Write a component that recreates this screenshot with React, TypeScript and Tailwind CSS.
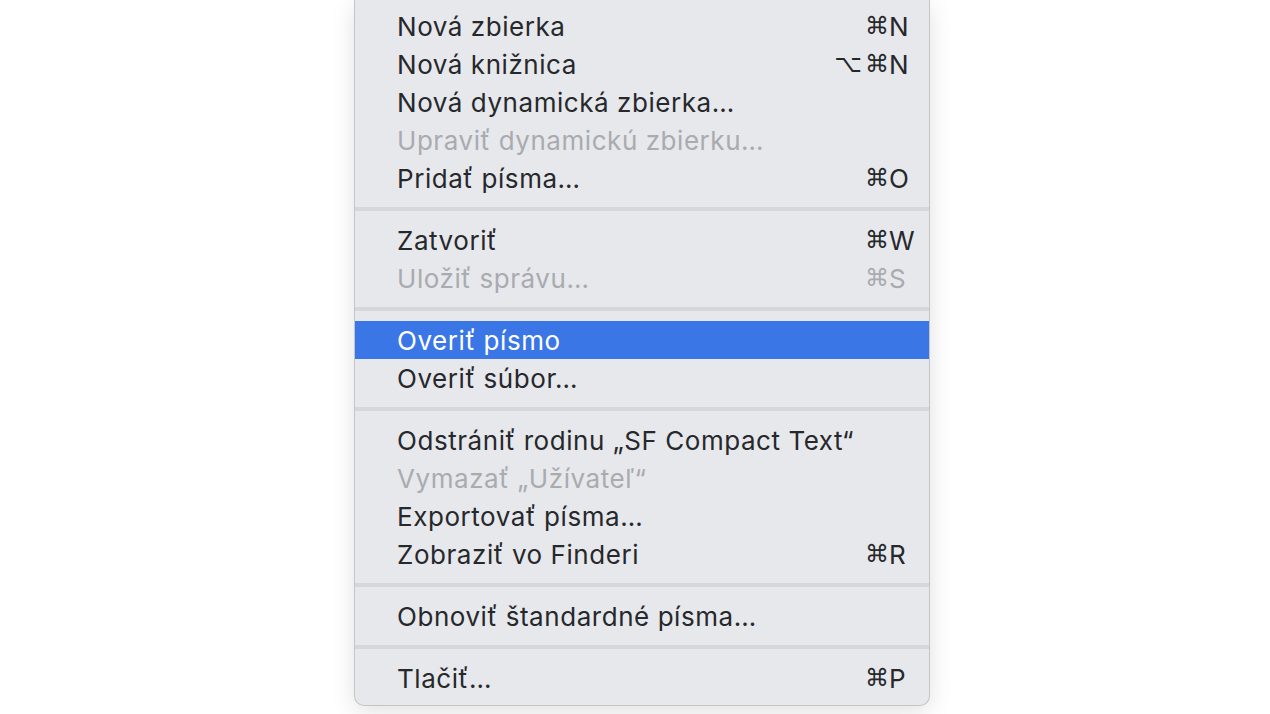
import React from 'react'

type Item = { label: string; mods?: string; key?: string; disabled?: boolean; active?: boolean }

const groups: Item[][] = [
  [
    { label: 'Nová zbierka', key: 'N' },
    { label: 'Nová knižnica', mods: '⌥', key: 'N' },
    { label: 'Nová dynamická zbierka…' },
    { label: 'Upraviť dynamickú zbierku…', disabled: true },
    { label: 'Pridať písma…', key: 'O' },
  ],
  [
    { label: 'Zatvoriť', key: 'W' },
    { label: 'Uložiť správu…', key: 'S', disabled: true },
  ],
  [
    { label: 'Overiť písmo', active: true },
    { label: 'Overiť súbor…' },
  ],
  [
    { label: 'Odstrániť rodinu „SF Compact Text“' },
    { label: 'Vymazať „Užívateľ“', disabled: true },
    { label: 'Exportovať písma…' },
    { label: 'Zobraziť vo Finderi', key: 'R' },
  ],
  [{ label: 'Obnoviť štandardné písma…' }],
  [{ label: 'Tlačiť…', key: 'P' }],
]

function Row({ item }: { item: Item }) {
  const color = item.active ? 'bg-[#3b76e6] text-white' : item.disabled ? 'text-[#a9abaf]' : 'text-[#27282b]'
  return (
    <div className={`flex h-[38px] items-center pl-[42px] ${color}`}>
      <span className="flex-1 whitespace-nowrap tracking-[0.55px]">{item.label}</span>
      {item.key && (
        <span className="flex w-[96px] items-center">
          <span className="w-[32px] pr-[3px] text-right font-['DejaVu_Sans'] text-[24px]">{item.mods}</span>
          <span className="font-['DejaVu_Sans'] text-[24px]">⌘</span>
          <span>{item.key}</span>
        </span>
      )}
    </div>
  )
}

export default function App() {
  return (
    <div className="h-[714px] w-full overflow-hidden bg-white font-['Inter','Liberation_Sans',sans-serif] text-[26px]">
      <div className="ml-[354px] w-[576px] rounded-b-[10px] border border-t-0 border-[#c4c5c9] bg-[#e6e8ec] pb-[8px] pt-[7px] shadow-[0_6px_24px_rgba(0,0,0,0.12)]">
        {groups.map((g, i) => (
          <div key={i}>
            {i > 0 && (
              <div className="flex h-[24px] items-center">
                <div className="h-[4px] w-full bg-[#d5d7db]" />
              </div>
            )}
            {g.map((item) => (
              <Row key={item.label} item={item} />
            ))}
          </div>
        ))}
      </div>
    </div>
  )
}
